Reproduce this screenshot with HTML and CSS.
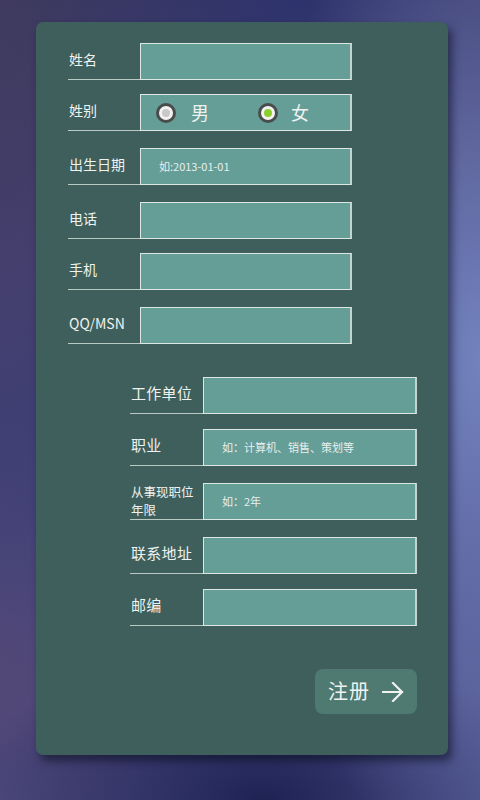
FILE: index.html
```html
<!DOCTYPE html>
<html lang="zh">
<head>
<meta charset="utf-8">
<title>注册</title>
<link rel="stylesheet" href="styles.css">
</head>
<body>
<div class="card">
  <div class="group group-a">
    <div class="row">
      <div class="label">姓名</div>
      <div class="field"></div>
    </div>
    <div class="row gap-s">
      <div class="label">姓别</div>
      <div class="field radios">
        <span class="radio"><span class="dot"></span></span><span class="opt">男</span>
        <span class="radio checked"><span class="dot"></span></span><span class="opt last">女</span>
      </div>
    </div>
    <div class="row gap-l">
      <div class="label">出生日期</div>
      <div class="field"><span class="ph">如:2013-01-01</span></div>
    </div>
    <div class="row gap-l">
      <div class="label">电话</div>
      <div class="field"></div>
    </div>
    <div class="row gap-s">
      <div class="label">手机</div>
      <div class="field"></div>
    </div>
    <div class="row gap-l">
      <div class="label">QQ/MSN</div>
      <div class="field"></div>
    </div>
  </div>
  <div class="group group-b">
    <div class="row">
      <div class="label">工作单位</div>
      <div class="field"></div>
    </div>
    <div class="row gap-m">
      <div class="label">职业</div>
      <div class="field"><span class="ph">如：计算机、销售、策划等</span></div>
    </div>
    <div class="row gap-l">
      <div class="label small"><span class="line">从事现职位</span><span class="line">年限</span></div>
      <div class="field"><span class="ph">如：2年</span></div>
    </div>
    <div class="row gap-l">
      <div class="label">联系地址</div>
      <div class="field"></div>
    </div>
    <div class="row gap-m">
      <div class="label">邮编</div>
      <div class="field"></div>
    </div>
  </div>
  <div class="actions">
    <div class="btn">注册
      <svg class="arrow" width="22" height="20" viewBox="0 0 22 20"><path d="M1 10 H20 M11 1 L20 10 L11 19" fill="none" stroke="#eef2f0" stroke-width="2.2" stroke-linecap="square"/></svg>
    </div>
  </div>
</div>
</body>
</html>
```

FILE: styles.css
```css
html, body {
  margin: 0;
  padding: 0;
}
body {
  width: 480px;
  height: 800px;
  overflow: hidden;
  font-family: "Noto Sans CJK SC", "Noto Sans", sans-serif;
  color: #eef2f0;
  background:
    radial-gradient(ellipse 230px 520px at 100% 45%, rgba(118,134,194,0.95) 0%, rgba(118,134,194,0) 100%),
    radial-gradient(ellipse 300px 160px at 55% 100%, rgba(28,31,80,0.95) 0%, rgba(28,31,80,0) 100%),
    radial-gradient(ellipse 300px 200px at 62% 0%, rgba(44,50,110,0.9) 0%, rgba(44,50,110,0) 100%),
    radial-gradient(ellipse 220px 260px at 0% 85%, rgba(84,72,118,0.9) 0%, rgba(84,72,118,0) 100%),
    linear-gradient(160deg, #3f3a5d 0%, #443f6e 30%, #3b3f78 55%, #4a4c84 80%, #565a94 100%);
}
.card {
  box-sizing: border-box;
  margin: 22px 0 0 36px;
  width: 412px;
  height: 733px;
  background: #3e5f5b;
  border-radius: 7px;
  box-shadow: 4px 6px 9px rgba(10, 12, 30, 0.55);
  padding-top: 21px;
}
.group-a {
  padding-left: 32px;
}
.group-b {
  padding-left: 94px;
  margin-top: 33px;
}
.row {
  display: flex;
  height: 37px;
}
.gap-s { margin-top: 14px; }
.gap-m { margin-top: 15px; }
.gap-l { margin-top: 17px; }
.label {
  box-sizing: border-box;
  width: 72px;
  height: 37px;
  flex-shrink: 0;
  display: flex;
  align-items: center;
  padding: 0 0 4px 1px;
  font-size: 14px;
  line-height: 16px;
  border-bottom: 1px solid #b9c9c4;
  white-space: nowrap;
}
.group-b .label {
  width: 73px;
  font-size: 15px;
  letter-spacing: 0.3px;
}
.group-b .label.small {
  flex-direction: column;
  align-items: flex-start;
  justify-content: flex-start;
  font-size: 12.5px;
  letter-spacing: 0;
  padding: 0 0 0 1px;
}
.line {
  display: block;
  height: 18px;
  line-height: 18px;
}
.field {
  box-sizing: border-box;
  width: 212px;
  height: 37px;
  flex-shrink: 0;
  background: #659d97;
  border: 1px solid #dde8e4;
  border-right: 2px solid #c3d3cf;
  display: flex;
  align-items: center;
}
.group-b .field {
  width: 214px;
}
.ph {
  font-size: 11px;
  padding-left: 18px;
  padding-bottom: 2px;
  color: #e9efed;
}
.radios {
  padding-left: 15px;
}
.radio {
  box-sizing: border-box;
  flex-shrink: 0;
  width: 20px;
  height: 20px;
  border-radius: 50%;
  border: 3px solid #4a4c4c;
  background: #f2f2f2;
  display: flex;
  align-items: center;
  justify-content: center;
}
.dot {
  width: 8px;
  height: 8px;
  border-radius: 50%;
  background: #c8c8c8;
}
.checked .dot {
  background: #8ccf2c;
}
.opt {
  flex-shrink: 0;
  font-size: 18px;
  margin-left: 15px;
  width: 67px;
  padding-bottom: 2px;
}
.opt.last {
  width: auto;
  margin-left: 13px;
}
.actions {
  display: flex;
  justify-content: flex-end;
  padding-right: 31px;
  margin-top: 43px;
}
.btn {
  box-sizing: border-box;
  width: 102px;
  height: 45px;
  border-radius: 8px;
  background: #4e7a72;
  display: flex;
  align-items: center;
  padding-left: 13px;
  font-size: 20px;
  letter-spacing: 1px;
  padding-bottom: 2px;
}
.arrow {
  margin-left: 12px;
  margin-top: 2px;
}
```
